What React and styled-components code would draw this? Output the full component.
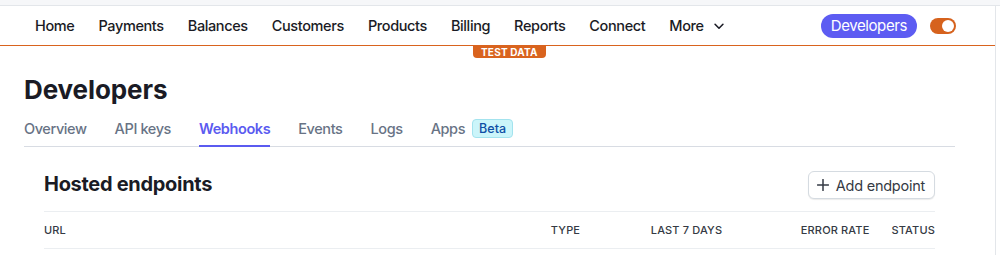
import React from 'react';
import styled, { createGlobalStyle } from 'styled-components';

const GlobalStyle = createGlobalStyle`
  html, body {
    margin: 0;
    padding: 0;
    background: #ffffff;
  }
  body {
    font-family: Inter, "Noto Sans", "Liberation Sans", sans-serif;
    color: #1a1b25;
    -webkit-font-smoothing: antialiased;
  }
`;

const TopStrip = styled.div`
  height: 5px;
  background: #f6f7f9;
  border-bottom: 1px solid #e3e6ea;
`;

const Frame = styled.div`
  width: 995px;
  border-right: 1px solid #e3e6ea;
  min-height: 249px;
`;

const NavBar = styled.nav`
  position: relative;
  height: 39px;
  display: flex;
  align-items: center;
  padding: 0 39px 0 35px;
  border-bottom: 1px solid #d9631e;
`;

const NavList = styled.div`
  display: flex;
  align-items: center;
  gap: 24px;
  flex: 1;
`;

const NavItem = styled.span`
  display: inline-flex;
  align-items: center;
  gap: 8px;
  font-size: 14.5px;
  font-weight: 450;
  color: #1a1b25;
  letter-spacing: -0.38px;
`;

const DevPill = styled.span`
  display: inline-flex;
  align-items: center;
  height: 24px;
  padding: 0 10px;
  border-radius: 12px;
  background: #5d5cf2;
  color: #ffffff;
  font-size: 15px;
  letter-spacing: -0.4px;
  margin-right: 13px;
`;

const Toggle = styled.span`
  position: relative;
  width: 26px;
  height: 16px;
  border-radius: 8px;
  background: #d6621d;

  &::after {
    content: '';
    position: absolute;
    top: 2px;
    right: 2px;
    width: 12px;
    height: 12px;
    border-radius: 50%;
    background: #ffffff;
  }
`;

const TestBadge = styled.span`
  position: absolute;
  top: 100%;
  left: 473px;
  height: 13px;
  padding: 0 8px 0 8px;
  display: flex;
  align-items: center;
  background: #d9631e;
  color: #ffffff;
  font-size: 10px;
  font-weight: 700;
  letter-spacing: 0.2px;
  border-radius: 0 0 4px 4px;
`;

const Header = styled.header`
  padding: 28px 40px 0 24px;
`;

const Title = styled.h1`
  margin: 0;
  font-size: 26px;
  line-height: 32px;
  font-weight: 700;
  letter-spacing: -0.1px;
  color: #1a1b25;
`;

const Tabs = styled.div`
  display: flex;
  align-items: center;
  gap: 28px;
  margin-top: 8px;
  border-bottom: 1px solid #d8dce3;
`;

const Tab = styled.span`
  display: inline-flex;
  align-items: center;
  gap: 7px;
  height: 33px;
  padding: 0 0 3px;
  box-sizing: border-box;
  font-size: 14.5px;
  letter-spacing: -0.4px;
  font-weight: ${(p) => (p.$active ? 600 : 450)};
  color: ${(p) => (p.$active ? '#5b5bf0' : '#687385')};
  border-bottom: 2px solid ${(p) => (p.$active ? '#5b5bf0' : 'transparent')};
  margin-bottom: -1px;
`;

const BetaBadge = styled.span`
  display: inline-flex;
  align-items: center;
  height: 17px;
  padding: 0 6px;
  border-radius: 4px;
  background: #cbf5fa;
  border: 1px solid #a3e3ee;
  color: #0e4fa5;
  font-size: 12.5px;
  font-weight: 500;
  letter-spacing: 0;
`;

const Panel = styled.section`
  padding: 24px 60px 0 44px;
`;

const PanelHead = styled.div`
  display: flex;
  align-items: center;
  justify-content: space-between;
  padding-bottom: 12px;
  border-bottom: 1px solid #ebeef1;
`;

const PanelTitle = styled.h2`
  margin: 0 0 3px;
  font-size: 20px;
  font-weight: 700;
  letter-spacing: -0.3px;
  color: #1a1b25;
`;

const Button = styled.button`
  display: inline-flex;
  align-items: center;
  gap: 7px;
  height: 28px;
  padding: 0 9px 0 8px;
  background: #ffffff;
  border: 1px solid #d5dbe1;
  border-radius: 6px;
  box-shadow: 0 1px 1px rgba(0, 0, 0, 0.08);
  font-family: inherit;
  font-size: 14.5px;
  letter-spacing: -0.25px;
  color: #353a44;
`;

const TableHead = styled.div`
  display: grid;
  grid-template-columns: 1fr 100px 150px auto auto;
  align-items: center;
  height: 36px;
  border-bottom: 1px solid #ebeef1;
`;

const Col = styled.span`
  font-size: 11px;
  font-weight: 500;
  letter-spacing: 0.15px;
  text-transform: uppercase;
  color: #353a44;
  padding-right: ${(p) => p.$pad || 0}px;
`;

const Chevron = () => (
  <svg width="14" height="14" viewBox="0 0 16 16" fill="none">
    <path d="M3.5 6l4.5 4.5L12.5 6" stroke="#1a1b25" strokeWidth="1.8" strokeLinecap="round" strokeLinejoin="round" />
  </svg>
);

const Plus = () => (
  <svg width="12" height="12" viewBox="0 0 12 12" fill="none">
    <path d="M6 0.5v11M0.5 6h11" stroke="#353a44" strokeWidth="1.5" strokeLinecap="round" />
  </svg>
);

const navItems = ['Home', 'Payments', 'Balances', 'Customers', 'Products', 'Billing', 'Reports', 'Connect'];

export default function App() {
  return (
    <>
      <GlobalStyle />
      <TopStrip />
      <Frame>
        <NavBar>
          <NavList>
            {navItems.map((n) => (
              <NavItem key={n}>{n}</NavItem>
            ))}
            <NavItem>
              More <Chevron />
            </NavItem>
          </NavList>
          <DevPill>Developers</DevPill>
          <Toggle />
          <TestBadge>TEST DATA</TestBadge>
        </NavBar>

        <Header>
          <Title>Developers</Title>
          <Tabs>
            <Tab>Overview</Tab>
            <Tab>API keys</Tab>
            <Tab $active>Webhooks</Tab>
            <Tab>Events</Tab>
            <Tab>Logs</Tab>
            <Tab>
              Apps <BetaBadge>Beta</BetaBadge>
            </Tab>
          </Tabs>
        </Header>

        <Panel>
          <PanelHead>
            <PanelTitle>Hosted endpoints</PanelTitle>
            <Button>
              <Plus /> Add endpoint
            </Button>
          </PanelHead>
          <TableHead>
            <Col>URL</Col>
            <Col>Type</Col>
            <Col>Last 7 days</Col>
            <Col $pad={22}>Error rate</Col>
            <Col>Status</Col>
          </TableHead>
        </Panel>
      </Frame>
    </>
  );
}
